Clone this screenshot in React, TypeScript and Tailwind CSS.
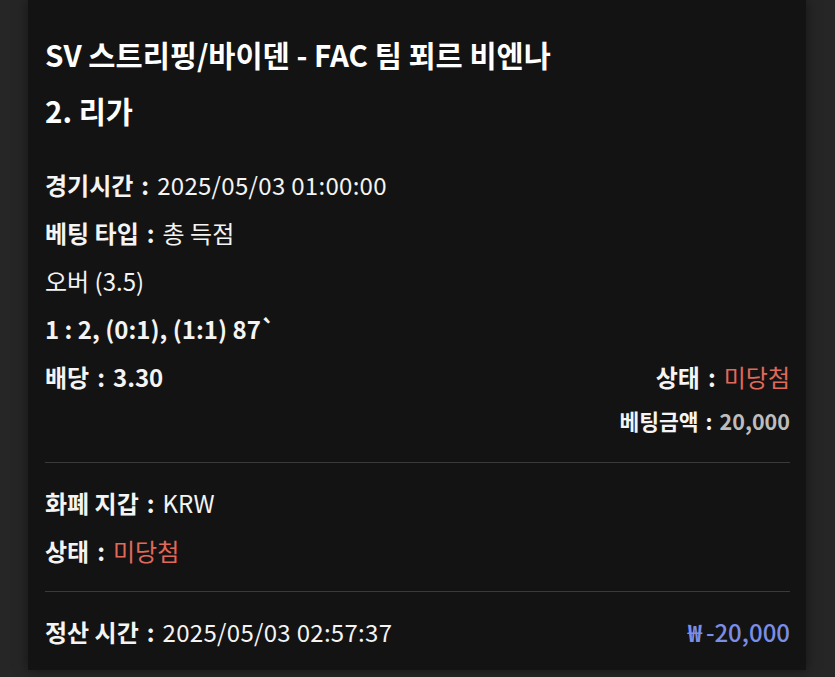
import React from "react";

// Bet history detail card (dark theme)

const font = { fontFamily: '"Noto Sans CJK KR", "Noto Sans", sans-serif' };

function Colon() {
  return <span className="font-bold mx-[8px]">:</span>;
}

function Row({ label, children, className = "" }: { label: string; children?: React.ReactNode; className?: string }) {
  return (
    <div className={`h-[48px] flex items-center text-[24px] text-[#f4f4f4] ${className}`}>
      <span className="font-bold">{label}</span>
      <Colon />
      {children}
    </div>
  );
}

export default function App() {
  return (
    <div className="w-[835px] h-[677px] bg-[#262626] overflow-hidden" style={font}>
      <div className="ml-[28px] w-[778px] h-[670px] bg-[#131313] shadow-[0_0_12px_rgba(0,0,0,0.5)] pl-[17px] pr-[16px] pt-[26px]">
        <div className="text-[29.5px] leading-[56px] font-bold text-white">
          <p>SV 스트리핑/바이덴 - FAC 팀 푀르 비엔나</p>
          <p>2. 리가</p>
        </div>

        <div className="mt-[23px]">
          <Row label="경기시간">
            <span className="font-normal tracking-[0.3px]">2025/05/03 01:00:00</span>
          </Row>
          <Row label="베팅 타입">
            <span className="font-normal">총 득점</span>
          </Row>
          <div className="h-[48px] flex items-center text-[24px] text-[#f4f4f4]">오버 (3.5)</div>
          <div className="h-[48px] flex items-center text-[24px] font-bold text-[#f4f4f4]">1 : 2, (0:1), (1:1) 87`</div>
          <div className="h-[48px] flex items-center justify-between text-[24px] text-[#f4f4f4]">
            <span className="flex items-center font-bold">
              배당<Colon />3.30
            </span>
            <span className="flex items-center">
              <span className="font-bold">상태</span>
              <Colon />
              <span className="text-[#e0695a]">미당첨</span>
            </span>
          </div>
          <div className="h-[40px] flex items-center justify-end text-[21.5px] font-bold text-[#f4f4f4]">
            베팅금액<span className="mx-[7px]">:</span>
            <span className="text-[#bdbdbd]">20,000</span>
          </div>
        </div>

        <div className="mt-[21px] h-px bg-[#3a3a3a]" />

        <div className="mt-[16px]">
          <Row label="화폐 지갑">
            <span className="font-normal">KRW</span>
          </Row>
          <Row label="상태">
            <span className="text-[#e0695a]">미당첨</span>
          </Row>
        </div>

        <div className="mt-[16px] h-px bg-[#3a3a3a]" />

        <div className="h-[48px] mt-[16px] flex items-center justify-between text-[24px] text-[#f4f4f4]">
          <span className="flex items-center">
            <span className="font-bold">정산 시간</span>
            <Colon />
            <span className="tracking-[0.3px]">2025/05/03 02:57:37</span>
          </span>
          <span className="text-[#7b8ee6] font-medium">
            <span className="font-bold mr-[4px]">₩</span>-20,000
          </span>
        </div>
      </div>
    </div>
  );
}
